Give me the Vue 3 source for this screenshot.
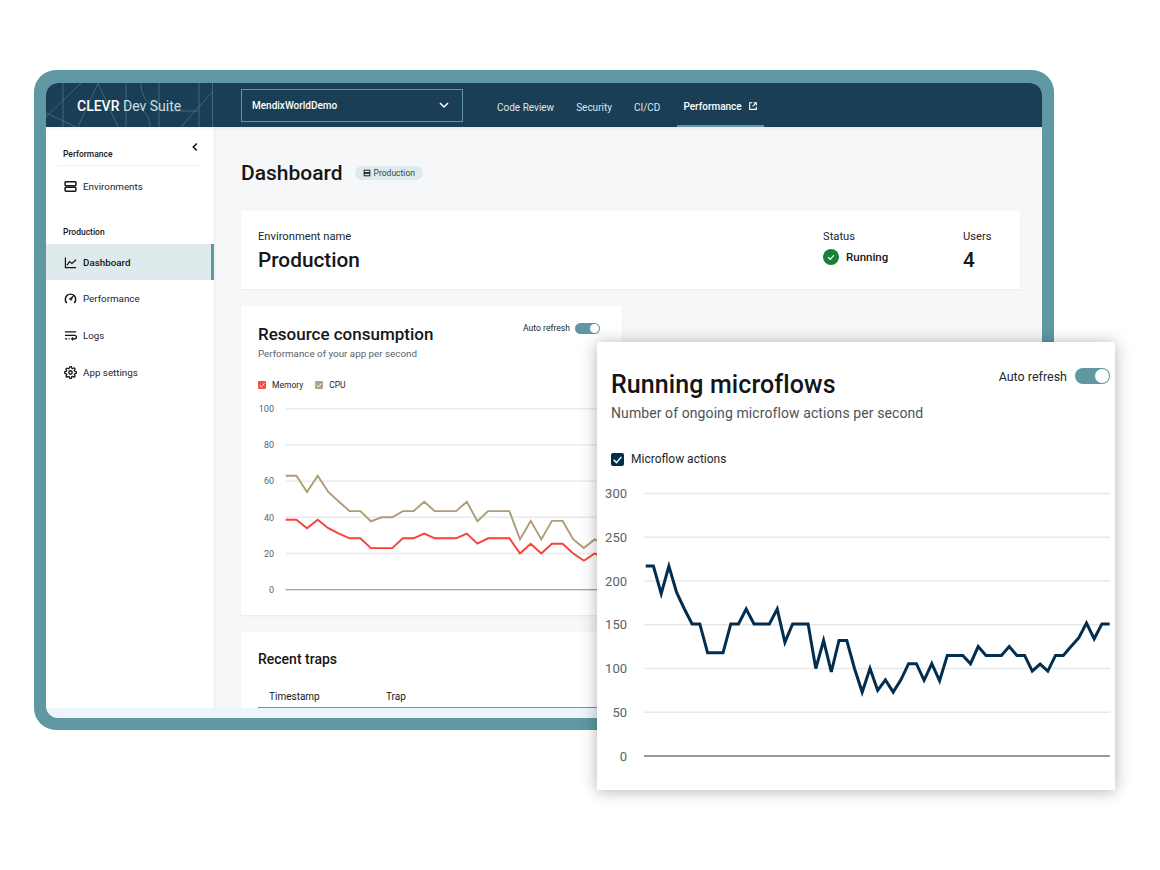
<script setup>
const navItems = ['Code Review', 'Security', 'CI/CD']

const cpu = [63,63,54,63,54,48.6,43.4,43.4,37.8,40,40,43.4,43.4,48.6,43.4,43.4,43.4,48.6,37.8,43.4,43.4,43.4,27.8,38,27.8,38,38,27.8,23,27.8,25]
const mem = [38.7,38.7,34,38.7,34,31,28.4,28.4,23,23,23,28.4,28.4,31,28.4,28.4,28.4,31,25.4,28.4,28.4,28.4,20,25.4,20,25.4,25.4,20,16,20,18]
const flows = [217,217,185.5,217,187,168,151,151,118,118,118,151,151,168,151,151,151,168,130,151,151,151,100,132,96,132,132,100,73,100,75,87,73,87,105.5,105.5,86.5,105.5,86,115,115,115,105.5,125,115,115,115,125,115,115,97,105,97,115,115,125,135,152,134,151,151]

const line = (data, x0, step, base, scale) =>
  data.map((v, i) => `${(x0 + i * step).toFixed(1)},${(base - v * scale).toFixed(1)}`).join(' ')

// Small chart: SVG origin is 241,400 on the page
const smallTicks = [100, 80, 60, 40, 20, 0].map((v) => ({ v, y: 189.7 - v * 1.81 }))
const cpuLine = line(cpu, 44.7, 10.65, 189.7, 1.81)
const memLine = line(mem, 44.7, 10.65, 189.7, 1.81)

// Large chart: SVG origin is 597,480 on the page
const bigTicks = [300, 250, 200, 150, 100, 50, 0].map((v) => ({ v, y: 276 - v * 0.875 }))
const flowLine = line(flows, 48.7, 7.733, 276, 0.875)
</script>

<template>
  <div class="stage">
    <div class="frame">
      <div class="screen">
        <header class="topbar">
          <div class="brand">
            <svg class="pattern" viewBox="0 0 167 44" fill="none" stroke="#41717f" stroke-width=".9">
              <path d="M0 34 35 0M17 0V44M0 30 30 44M32 44 52 0 72 44M80 0V44M80 22C96 22 104 32 104 44M113 0V44M95 0C95 18 108 28 125 28H152M135 44 167 8M153 0V44M166.500 0V44" />
            </svg>
            <span class="brand-text"><b>CLEVR</b> Dev Suite</span>
          </div>
          <div class="picker">
            <span>MendixWorldDemo</span>
            <svg viewBox="0 0 12 12" class="picker-chev" fill="none" stroke="#fff" stroke-width="1.5"><path d="M2 4l4 4 4-4" /></svg>
          </div>
          <nav class="nav">
            <a v-for="n in navItems" :key="n" class="nav-link">{{ n }}</a>
            <a class="nav-link active">
              Performance
              <svg viewBox="0 0 12 12" class="ext" fill="none" stroke="#fff" stroke-width="1.3"><path d="M5 2H2v8h8V7M6.500 2H10v3.500M10 2 5.500 6.500" /></svg>
            </a>
          </nav>
        </header>

        <div class="body">
          <aside class="side">
            <div class="side-head">
              <span class="side-title">Performance</span>
              <svg viewBox="0 0 10 10" class="collapse" fill="none" stroke="#161616" stroke-width="1.6"><path d="M6.800 1.500 3.300 5l3.500 3.500" /></svg>
            </div>
            <div class="side-item">
              <svg viewBox="0 0 14 14" class="ico" fill="none" stroke="#161616" stroke-width="1.600"><rect x="1.200" y="1.800" width="11.600" height="4.400" rx=".8" /><rect x="1.200" y="7.800" width="11.600" height="4.400" rx=".8" /></svg>
              Environments
            </div>
            <div class="side-title second">Production</div>
            <div class="side-item current">
              <svg viewBox="0 0 14 14" class="ico" fill="none" stroke="#161616" stroke-width="1.300"><path d="M1.500 1.500v11h11.500M3 10l3-4 2.500 2L13 4" /></svg>
              Dashboard
            </div>
            <div class="side-item">
              <svg viewBox="0 0 14 14" class="ico" fill="none" stroke="#161616" stroke-width="1.600"><path d="M3 11.800A5.600 5.600 0 1 1 11 11.800" /><path d="M10 4.200 7.800 9 5.700 7.500Z" fill="#161616" stroke-width=".8" /></svg>
              Performance
            </div>
            <div class="side-item">
              <svg viewBox="0 0 14 14" class="ico" fill="none" stroke="#161616" stroke-width="1.400"><path d="M1 3h12M1 6.800h10.500a1.900 1.900 0 0 1 0 3.800H8.500M9.800 9.200 8.300 10.600l1.500 1.500M1 10.600h2.500M5 10.600h1.200" /></svg>
              Logs
            </div>
            <div class="side-item">
              <svg viewBox="0 0 24 24" class="ico" fill="none" stroke="#161616" stroke-width="2.400"><circle cx="12" cy="12" r="3.200" /><path d="M19.400 15a1.650 1.650 0 0 0 .33 1.820l.06.06a2 2 0 1 1-2.830 2.830l-.06-.06a1.650 1.650 0 0 0-2.820 1.170V21a2 2 0 0 1-4 0v-.09A1.650 1.650 0 0 0 7.260 19.700l-.06.06a2 2 0 1 1-2.830-2.830l.06-.06A1.650 1.650 0 0 0 3.260 14H3a2 2 0 0 1 0-4h.09A1.650 1.650 0 0 0 4.300 7.260l-.06-.06a2 2 0 1 1 2.830-2.830l.06.06A1.650 1.650 0 0 0 10 3.260V3a2 2 0 0 1 4 0v.09a1.650 1.650 0 0 0 2.820 1.170l.06-.06a2 2 0 1 1 2.830 2.830l-.06.06A1.650 1.650 0 0 0 20.740 10H21a2 2 0 0 1 0 4h-.09a1.650 1.650 0 0 0-1.510 1Z" /></svg>
              App settings
            </div>
          </aside>

          <main class="main">
            <div class="title-row">
              <h1>Dashboard</h1>
              <span class="pill">
                <svg viewBox="0 0 10 10" fill="none" stroke="#21272a" stroke-width="1.300"><rect x="1.500" y="1.500" width="7" height="3" /><rect x="1.500" y="5.500" width="7" height="3" /></svg>
                Production
              </span>
            </div>

            <section class="card env">
              <div class="env-name">
                <div class="lbl">Environment name</div>
                <div class="big">Production</div>
              </div>
              <div class="env-status">
                <div class="lbl">Status</div>
                <div class="running">
                  <svg viewBox="0 0 16 16"><circle cx="8" cy="8" r="8" fill="#198038" /><path d="M5 8.200 7.200 10.300 11 6.200" fill="none" stroke="#fff" stroke-width="1.200" /></svg>
                  Running
                </div>
              </div>
              <div class="env-users">
                <div class="lbl">Users</div>
                <div class="big">4</div>
              </div>
            </section>

            <section class="card resource">
              <div class="res-head">
                <div>
                  <h2>Resource consumption</h2>
                  <p class="sub">Performance of your app per second</p>
                </div>
                <div class="refresh">
                  Auto refresh
                  <span class="toggle"><i></i></span>
                </div>
              </div>
              <div class="legend">
                <span class="leg"><span class="box red"><svg viewBox="0 0 10 10" fill="none" stroke="#fff" stroke-width="1.200"><path d="M2 5.200 4.200 7.400 8 3" /></svg></span>Memory</span>
                <span class="leg"><span class="box tan"><svg viewBox="0 0 10 10" fill="none" stroke="#fff" stroke-width="1.200"><path d="M2 5.200 4.200 7.400 8 3" /></svg></span>CPU</span>
              </div>
              <svg class="chart-small" viewBox="0 0 381 206">
                <g v-for="t in smallTicks" :key="t.v">
                  <line x1="44.700" :x2="381" :y1="t.y" :y2="t.y" :stroke="t.v === 0 ? '#7d8790' : '#e8eaec'" :stroke-width="t.v === 0 ? 1.100 : 1.400" />
                  <text x="33" :y="t.y + 3.300" text-anchor="end" class="tick-s">{{ t.v }}</text>
                </g>
                <polyline :points="cpuLine" fill="none" stroke="#ae9c77" stroke-width="1.900" />
                <polyline :points="memLine" fill="none" stroke="#fa3f35" stroke-width="1.900" />
              </svg>
            </section>

            <section class="card traps">
              <h3>Recent traps</h3>
              <div class="thead"><span class="col-a">Timestamp</span><span>Trap</span></div>
            </section>
          </main>
        </div>
      </div>
    </div>

    <section class="overlay">
      <div class="ov-head">
        <div>
          <h2 class="ov-title">Running microflows</h2>
          <p class="ov-sub">Number of ongoing microflow actions per second</p>
        </div>
        <div class="ov-refresh">
          Auto refresh
          <span class="toggle lg"><i></i></span>
        </div>
      </div>
      <div class="ov-legend">
        <span class="box navy"><svg viewBox="0 0 10 10" fill="none" stroke="#fff" stroke-width="1.100"><path d="M2 5.200 4.200 7.400 8 3" /></svg></span>
        Microflow actions
      </div>
      <svg class="chart-big" viewBox="0 0 518 310">
        <g v-for="t in bigTicks" :key="t.v">
          <line x1="47" x2="513" :y1="t.y" :y2="t.y" :stroke="t.v === 0 ? '#6f777e' : '#e6e8ea'" :stroke-width="t.v === 0 ? 1.500 : 1.500" />
          <text x="30" :y="t.y + 4.500" text-anchor="end" class="tick-b">{{ t.v }}</text>
        </g>
        <polyline :points="flowLine" fill="none" stroke="#012e4f" stroke-width="3" />
      </svg>
    </section>
  </div>
</template>

<style scoped>
.stage {
  position: relative;
  width: 1160px;
  height: 870px;
  background: #fff;
  overflow: hidden;
  font-family: Roboto, "Noto Sans", sans-serif;
  color: #161616;
  padding-top: 70px;
  box-sizing: border-box;
}
.frame {
  margin-left: 34px;
  width: 1020px;
  height: 660px;
  box-sizing: border-box;
  background: #5f98a2;
  border-radius: 22px;
  padding: 13px 12px 12px;
}
.screen {
  height: 635px;
  border-radius: 12px;
  overflow: hidden;
  background: #eef5fa;
}
.topbar {
  height: 44px;
  background: #193e55;
  display: flex;
  align-items: center;
  color: #fff;
  box-sizing: border-box;
}
.brand {
  position: relative;
  width: 167px;
  height: 44px;
  display: flex;
  align-items: center;
  padding: 1px 0 0 31px;
  box-sizing: border-box;
  overflow: hidden;
  flex: none;
}
.pattern { position: absolute; inset: 0; width: 167px; height: 44px; }
.brand-text { position: relative; font-size: 14px; color: #cfdbe1; white-space: nowrap; }
.brand-text b { font-weight: 500; color: #fff; }
.picker {
  margin-left: 28px;
  width: 222px;
  height: 33px;
  box-sizing: border-box;
  border: 1px solid #5f98a2;
  display: flex;
  align-items: center;
  justify-content: space-between;
  padding: 0 12px 0 10px;
  font-size: 10px;
  font-weight: 500;
  flex: none;
}
.picker-chev { width: 12px; height: 12px; }
.nav {
  margin-left: 23px;
  display: flex;
  height: 44px;
  align-items: stretch;
}
.nav-link {
  display: flex;
  align-items: center;
  padding: 4px 11px 0;
  font-size: 10px;
  color: #dfe7ea;
  white-space: nowrap;
  box-sizing: border-box;
}
.nav-link.active {
  margin-left: 6px;
  padding: 4px 6px 0;
  color: #fff;
  font-weight: 500;
  border-bottom: 2px solid #5f98a2;
  gap: 6px;
}
.ext { width: 10px; height: 10px; }

.body { display: flex; height: 581px; }
.side {
  width: 168px;
  flex: none;
  background: #fff;
  box-sizing: border-box;
  padding-top: 11px;
  box-shadow: inset 0 2px 3px rgba(0, 0, 0, .05);
}
.side-head {
  position: relative;
  margin: 0 12px 0 11px;
  height: 28px;
  border-bottom: 1px solid #eff1f3;
  display: flex;
  align-items: flex-end;
  padding: 0 0 6px 6px;
  box-sizing: border-box;
}
.side-title { font-size: 8.500px; font-weight: 500; line-height: 10px; }
.second { margin: 21px 0 7px 17px; }
.collapse { position: absolute; right: 2px; top: 4px; width: 10px; height: 10px; }
.side-item {
  display: flex;
  align-items: center;
  gap: 6px;
  height: 36.700px;
  padding-left: 18px;
  font-size: 9.800px;
  color: #21272a;
  box-sizing: border-box;
}
.side-head + .side-item { height: 40px; }
.side-item.current {
  height: 36.400px;
  background: #deeaeb;
  border-right: 3px solid #5f98a2;
  font-weight: 500;
  color: #161616;
}
.ico { width: 13px; height: 13px; flex: none; }

.main {
  flex: 1;
  min-width: 0;
  background: #f6f7f9;
  padding: 31px 0 0 27px;
  overflow: hidden;
  box-shadow: inset 1px 2px 3px rgba(0, 0, 0, .05);
}
.title-row { display: flex; align-items: center; height: 30px; gap: 12px; }
h1 { margin: 0; font-size: 21px; font-weight: 500; color: #161616; }
.pill {
  display: flex;
  align-items: center;
  gap: 3px;
  background: #deeaeb;
  border-radius: 8px;
  height: 14px;
  padding: 0 8px;
  font-size: 8.500px;
  color: #3b4449;
}
.pill svg { width: 8px; height: 8px; }
.card { background: #fff; box-shadow: 0 1px 2px rgba(0, 0, 0, .06); box-sizing: border-box; }
.env {
  margin-top: 23px;
  width: 779px;
  height: 78px;
  display: flex;
  padding: 19px 0 0 17px;
}
.env-name { width: 565px; }
.env-status { width: 140px; }
.lbl { font-size: 11.200px; line-height: 14px; color: #21272a; }
.big { font-size: 20.800px; font-weight: 500; line-height: 26px; margin-top: 3px; }
.running { display: flex; align-items: center; gap: 7px; font-size: 11.500px; font-weight: 500; margin-top: 5px; }
.running svg { width: 16px; height: 16px; }

.resource {
  margin-top: 17px;
  width: 381px;
  height: 309px;
  overflow: hidden;
  padding-top: 17px;
}
.res-head { display: flex; justify-content: space-between; padding: 0 22px 0 17px; }
.res-head h2 { margin: 0; font-size: 17px; font-weight: 500; line-height: 22px; }
.sub { margin: 2px 0 0; font-size: 9.800px; line-height: 13px; color: #5b6368; }
.refresh { display: flex; align-items: center; gap: 5px; font-size: 8.600px; height: 12px; margin-top: -1px; color: #21272a; }
.toggle {
  display: inline-flex;
  align-items: center;
  justify-content: flex-end;
  width: 25px;
  height: 11px;
  border-radius: 6px;
  background: #5f98a2;
  padding-right: 1px;
  box-sizing: border-box;
}
.toggle i { width: 9px; height: 9px; border-radius: 50%; background: #fff; display: block; }
.toggle.lg { width: 35px; height: 16px; border-radius: 8px; }
.toggle.lg i { width: 14px; height: 14px; }

.legend { display: flex; gap: 12px; padding-left: 17px; margin-top: 20px; }
.leg { display: flex; align-items: center; gap: 6px; font-size: 8.500px; line-height: 10px; color: #21272a; }
.box { display: inline-flex; width: 8px; height: 8px; border-radius: 1px; }
.box svg { width: 100%; height: 100%; }
.red { background: #fa4d45; }
.tan { background: #b3a381; }
.chart-small { display: block; width: 381px; height: 206px; margin-top: 10px; }
.tick-s { font-size: 9px; fill: #5b6368; font-family: Roboto, "Noto Sans", sans-serif; }

.traps { margin-top: 17px; width: 381px; height: 80px; padding: 18px 0 0 17px; overflow: hidden; }
.traps h3 { margin: 0; font-size: 14px; font-weight: 500; line-height: 18px; }
.thead {
  display: flex;
  margin-top: 22px;
  padding: 0 0 4px 11px;
  border-bottom: 1px solid #7d8f9c;
  font-size: 10px;
  font-weight: 400;
  line-height: 13px;
}
.col-a { width: 117px; }

.overlay {
  position: absolute;
  left: 597px;
  top: 342px;
  width: 518px;
  height: 448px;
  background: #fff;
  box-shadow: 0 1px 15px rgba(0, 0, 0, .3);
}
.ov-head { display: flex; justify-content: space-between; padding: 26px 5px 0 14px; }
.ov-title { margin: 0; font-size: 25px; font-weight: 500; line-height: 34px; color: #121619; letter-spacing: .1px; }
.ov-sub { margin: 1px 0 0; font-size: 14px; line-height: 20px; color: #4d5358; letter-spacing: .09px; }
.ov-refresh { display: flex; align-items: center; gap: 8px; height: 16px; font-size: 12.500px; color: #21272a; }
.ov-legend {
  display: flex;
  align-items: center;
  gap: 7px;
  margin: 28px 0 0 14px;
  font-size: 12px;
  line-height: 16px;
  color: #21272a;
}
.navy { width: 13px; height: 13px; background: #012e4f; border-radius: 2px; }
.chart-big { position: absolute; left: 0; top: 138px; width: 518px; height: 310px; }
.tick-b { font-size: 13px; fill: #5b6368; font-family: Roboto, "Noto Sans", sans-serif; }
</style>

<style>
html, body { margin: 0; background: #fff; }
</style>
